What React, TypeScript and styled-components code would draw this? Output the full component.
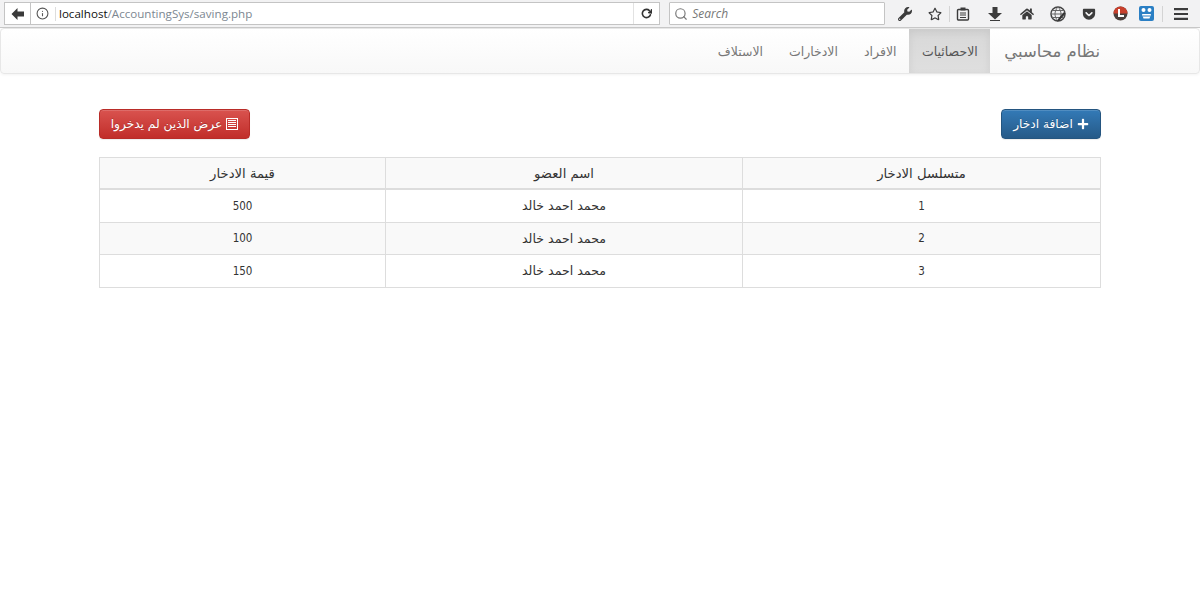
import React from 'react'
import styled, { createGlobalStyle } from 'styled-components'
import { FaGetPocket, FaHome, FaPlus, FaRegStar, FaWrench } from 'react-icons/fa'
import { FiInfo, FiRotateCw, FiSearch } from 'react-icons/fi'

const GlobalStyle = createGlobalStyle`
  html, body {
    margin: 0;
    padding: 0;
    background: #fff;
  }
  body {
    font-family: "DejaVu Sans", "Liberation Sans", sans-serif;
  }
`

const Toolbar = styled.div`
  display: flex;
  align-items: center;
  height: 27px;
  background: #f2f2f3;
  border-bottom: 1px solid #c8c8c8;
  box-sizing: content-box;
  padding-left: 4px;
`

const BackButton = styled.div`
  display: flex;
  align-items: center;
  justify-content: center;
  width: 26px;
  height: 23px;
  box-sizing: border-box;
  background: #fff;
  border: 1px solid #c4c4c4;
  border-right: none;
`

const UrlBar = styled.div`
  display: flex;
  align-items: center;
  width: 631px;
  height: 23px;
  box-sizing: border-box;
  background: #fff;
  border: 1px solid #c4c4c4;
  font-family: "Open Sans", sans-serif;
  font-size: 11.6px;
`

const InfoSlot = styled.div`
  display: flex;
  align-items: center;
  justify-content: center;
  width: 24px;
  height: 14px;
  color: #555;
  font-size: 13px;
  border-right: 1px solid #ddd;
  margin-right: 3px;
`

const Host = styled.span`
  color: #111;
`

const UrlPath = styled.span`
  color: #7c8791;
  flex: 1;
`

const ReloadSlot = styled.div`
  display: flex;
  align-items: center;
  justify-content: center;
  width: 25px;
  height: 21px;
  border-left: 1px solid #e2e2e2;
  color: #333;
  font-size: 11px;
  svg {
    stroke-width: 3.5;
  }
`

const SearchBox = styled.div`
  display: flex;
  align-items: center;
  gap: 4px;
  width: 216px;
  height: 23px;
  box-sizing: border-box;
  margin-left: 9px;
  padding-left: 4px;
  background: #fff;
  border: 1px solid #c4c4c4;
  border-radius: 1px;
  color: #777;
  font-family: "Open Sans", sans-serif;
  font-style: italic;
  font-size: 12px;
  svg {
    font-size: 14px;
    color: #777;
  }
`

const ToolIcons = styled.div`
  display: flex;
  align-items: center;
  flex: 1;
  height: 100%;
`

const ToolIcon = styled.div<{ $w: number }>`
  display: flex;
  align-items: center;
  justify-content: center;
  width: ${p => p.$w}px;
  height: 100%;
  color: #3c3c3c;
  font-size: 14px;
`

const Separator = styled.div<{ $left: number }>`
  width: 1px;
  height: 16px;
  margin-left: ${p => p.$left}px;
  background: #d4d4d4;
`

const Navbar = styled.nav`
  display: flex;
  direction: rtl;
  height: 46px;
  box-sizing: border-box;
  padding-right: 99px;
  background: linear-gradient(to bottom, #fff 0%, #f8f8f8 100%);
  border: 1px solid #e7e7e7;
  border-radius: 4px;
  box-shadow: 0 1px 3px rgba(0, 0, 0, 0.05);
`

const Brand = styled.div`
  display: flex;
  align-items: center;
  padding-left: 14px;
  color: #777;
  font-size: 16.5px;
`

const NavItem = styled.div<{ $active?: boolean }>`
  display: flex;
  align-items: center;
  padding: 0 ${p => (p.$active ? '12.5px' : '13px')};
  color: ${p => (p.$active ? '#555' : '#777')};
  font-size: 12.5px;
  background: ${p => (p.$active ? 'linear-gradient(to bottom, #d8d8d8 0%, #dfdfdf 100%)' : 'transparent')};
  box-shadow: ${p => (p.$active ? 'inset 0 3px 9px rgba(0, 0, 0, 0.075)' : 'none')};
`

const Page = styled.main`
  padding: 35px 99px 0;
`

const Actions = styled.div`
  display: flex;
  justify-content: space-between;
  direction: rtl;
  margin-bottom: 18px;
`

const ActionButton = styled.button<{ $kind: 'primary' | 'danger' }>`
  display: flex;
  align-items: center;
  justify-content: center;
  gap: 4px;
  height: 30px;
  width: ${p => (p.$kind === 'primary' ? '100px' : '151px')};
  padding: 0;
  direction: rtl;
  font-family: inherit;
  font-size: 12.2px;
  color: #fff;
  text-shadow: 0 -1px 0 rgba(0, 0, 0, 0.2);
  border: 1px solid ${p => (p.$kind === 'primary' ? '#245580' : '#b92c28')};
  border-radius: 4px;
  background: ${p =>
    p.$kind === 'primary'
      ? 'linear-gradient(to bottom, #337ab7 0%, #265a88 100%)'
      : 'linear-gradient(to bottom, #d9534f 0%, #c12e2a 100%)'};
  box-shadow: inset 0 1px 0 rgba(255, 255, 255, 0.15), 0 1px 1px rgba(0, 0, 0, 0.075);
`

const Table = styled.table`
  width: 1001px;
  direction: rtl;
  border-collapse: collapse;
  table-layout: fixed;
  color: #333;
  font-size: 12.6px;
`

const HeadCell = styled.th`
  height: 30px;
  padding: 0;
  font-weight: normal;
  font-size: 13.2px;
  text-align: center;
  border: 1px solid #ddd;
  border-bottom-width: 2px;
`

const Row = styled.tr<{ $striped: boolean }>`
  background: ${p => (p.$striped ? '#f9f9f9' : '#fff')};
`

const HeadRow = styled.tr`
  background: #f9f9f9;
`

const Cell = styled.td<{ $numeric?: boolean }>`
  height: 31.5px;
  padding: 0;
  text-align: center;
  border: 1px solid #ddd;
  font-stretch: ${p => (p.$numeric ? 'condensed' : 'normal')};
  font-size: ${p => (p.$numeric ? '11.5px' : 'inherit')};
`

const rows = [
  { id: 1, name: 'محمد احمد خالد', amount: 500 },
  { id: 2, name: 'محمد احمد خالد', amount: 100 },
  { id: 3, name: 'محمد احمد خالد', amount: 150 },
]

const BackArrow = () => (
  <svg width="13" height="12" viewBox="0 0 13 12">
    <path d="M6.5 0L0.5 6l6 6V8.5H13v-5H6.5z" fill="#3a3a3a" />
  </svg>
)

const DownArrow = () => (
  <svg width="14" height="14" viewBox="0 0 14 14">
    <path d="M4.5 0h5v6H14l-7 6.5L0 6h4.5z" fill="#3c3c3c" />
    <path d="M2 13h10v1H2z" fill="#3c3c3c" />
  </svg>
)

const BarsIcon = () => (
  <svg width="14" height="12" viewBox="0 0 14 12">
    <path d="M0 0h14v2.2H0zM0 4.9h14v2.2H0zM0 9.800h14V12H0z" fill="#3c3c3c" />
  </svg>
)

const ListIcon = () => (
  <svg width="12" height="12" viewBox="0 0 12 12">
    <rect x="0.5" y="0.5" width="11" height="11" fill="none" stroke="#fff" />
    <path d="M2 2.5h8M2 4.5h8M2 6.5h8M2 8.5h8" stroke="#fff" />
  </svg>
)

const ClipboardIcon = () => (
  <svg width="14" height="14" viewBox="0 0 14 14">
    <rect x="1.5" y="2.5" width="11" height="10.5" rx="1" fill="none" stroke="#3c3c3c" strokeWidth="1.4" />
    <rect x="4.5" y="0.5" width="5" height="3" fill="#3c3c3c" />
    <path d="M4 6h6M4 8h6M4 10.5h6" stroke="#3c3c3c" strokeWidth="1.2" />
  </svg>
)

const GlobeIcon = () => (
  <svg width="16" height="16" viewBox="0 0 16 16">
    <circle cx="8" cy="8" r="7" fill="none" stroke="#444" strokeWidth="1.5" />
    <path d="M1 8h14M8 1c-4 4-4 10 0 14M8 1c4 4 4 10 0 14M2 4.5h12M2 11.5h12" fill="none" stroke="#666" />
    <path d="M8 13l6-7 1.5 1.500-6 7-2.500 1z" fill="#333" />
  </svg>
)

const BadgeIcon = () => (
  <svg width="15" height="15" viewBox="0 0 15 15">
    <circle cx="7.5" cy="7.5" r="7" fill="#4a3f3c" />
    <path d="M0.5 7.5a7 7 0 0 1 14 0z" fill="#c8402c" />
    <path d="M6 3v7h5" fill="none" stroke="#fff" strokeWidth="2" />
  </svg>
)

const BlueIcon = () => (
  <svg width="15" height="15" viewBox="0 0 15 15">
    <rect width="15" height="15" rx="2" fill="#2a7fc4" />
    <circle cx="4.5" cy="4" r="2" fill="#fff" />
    <circle cx="10.5" cy="4" r="2" fill="#fff" />
    <path d="M3 8h9l-1.5 4.5h-6z" fill="#fff" />
    <path d="M4 10h7" stroke="#2a7fc4" />
  </svg>
)

const App = () => {
  return (
    <>
      <GlobalStyle />
      <Toolbar>
        <BackButton><BackArrow /></BackButton>
        <UrlBar>
          <InfoSlot><FiInfo /></InfoSlot>
          <Host>localhost</Host>
          <UrlPath>/AccountingSys/saving.php</UrlPath>
          <ReloadSlot><FiRotateCw /></ReloadSlot>
        </UrlBar>
        <SearchBox><FiSearch />Search</SearchBox>
        <ToolIcons>
          <ToolIcon $w={40}><FaWrench /></ToolIcon>
          <ToolIcon $w={20}><FaRegStar /></ToolIcon>
          <Separator $left={4} />
          <ToolIcon $w={27}><ClipboardIcon /></ToolIcon>
          <ToolIcon $w={36}><DownArrow /></ToolIcon>
          <ToolIcon $w={29}><FaHome /></ToolIcon>
          <ToolIcon $w={32}><GlobeIcon /></ToolIcon>
          <ToolIcon $w={31}><FaGetPocket /></ToolIcon>
          <ToolIcon $w={32}><BadgeIcon /></ToolIcon>
          <ToolIcon $w={20}><BlueIcon /></ToolIcon>
          <Separator $left={5} />
          <ToolIcon $w={37}><BarsIcon /></ToolIcon>
        </ToolIcons>
      </Toolbar>
      <Navbar>
        <Brand>نظام محاسبي</Brand>
        <NavItem $active>الاحصائيات</NavItem>
        <NavItem>الافراد</NavItem>
        <NavItem>الادخارات</NavItem>
        <NavItem>الاستلاف</NavItem>
      </Navbar>
      <Page>
        <Actions>
          <ActionButton $kind="primary"><FaPlus size={12} />اضافة ادخار</ActionButton>
          <ActionButton $kind="danger"><ListIcon />عرض الذين لم يدخروا</ActionButton>
        </Actions>
        <Table>
          <colgroup>
            <col style={{ width: 358 }} />
            <col style={{ width: 357 }} />
            <col style={{ width: 286 }} />
          </colgroup>
          <thead>
            <HeadRow>
              <HeadCell>متسلسل الادخار</HeadCell>
              <HeadCell>اسم العضو</HeadCell>
              <HeadCell>قيمة الادخار</HeadCell>
            </HeadRow>
          </thead>
          <tbody>
            {rows.map((row, i) => (
              <Row key={row.id} $striped={i % 2 === 1}>
                <Cell $numeric>{row.id}</Cell>
                <Cell>{row.name}</Cell>
                <Cell $numeric>{row.amount}</Cell>
              </Row>
            ))}
          </tbody>
        </Table>
      </Page>
    </>
  )
}

export default App
